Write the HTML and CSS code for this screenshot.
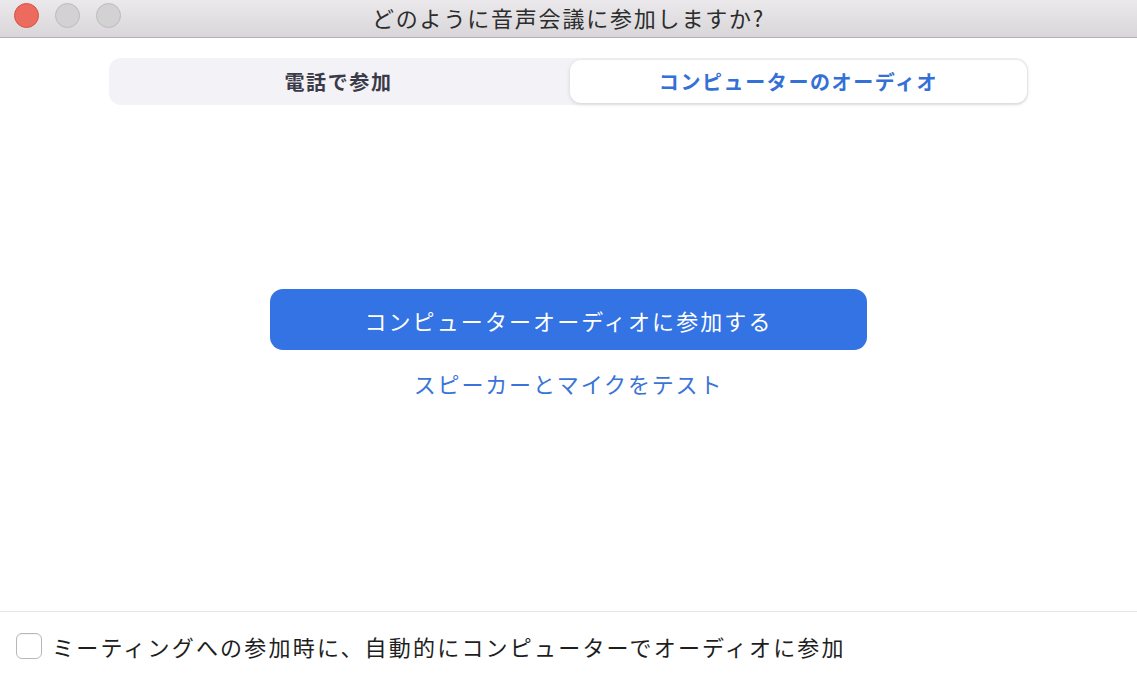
FILE: index.html
```html
<!DOCTYPE html>
<html>
<head>
    <title>どのように音声会議に参加しますか?</title>
    <link rel="stylesheet" href="styles.css">
</head>
<body>
    <div class="window">
        <div class="titlebar">
            <div class="lights">
                <span class="light close"></span>
                <span class="light"></span>
                <span class="light"></span>
            </div>
            <div class="title">どのように音声会議に参加しますか?</div>
        </div>

        <div class="content">
            <div class="tabs">
                <div class="tab">電話で参加</div>
                <div class="tab active">コンピューターのオーディオ</div>
            </div>

            <div class="main">
                <button class="join-btn">コンピューターオーディオに参加する</button>
                <a class="test-link" href="#">スピーカーとマイクをテスト</a>
            </div>
        </div>

        <div class="footer">
            <label class="auto-join">
                <span class="checkbox"></span>
                <span>ミーティングへの参加時に、自動的にコンピューターでオーディオに参加</span>
            </label>
        </div>
    </div>
</body>
</html>
```

FILE: styles.css
```css
body {
    margin: 0;
    font-family: "Noto Sans CJK JP", "Noto Sans", sans-serif;
    background: #ffffff;
    color: #222;
}
.window {
    width: 1137px;
    height: 680px;
    display: flex;
    flex-direction: column;
    overflow: hidden;
}
.titlebar {
    height: 37px;
    flex: none;
    display: flex;
    align-items: center;
    background: linear-gradient(#ebe9eb, #d8d6d8);
    border-bottom: 1px solid #b3b1b3;
    position: relative;
}
.lights {
    display: flex;
    gap: 16px;
    padding-left: 14px;
    margin-top: -6px;
}
.light {
    width: 23px;
    height: 23px;
    border-radius: 50%;
    background: #d3d2d3;
    border: 1px solid #bdbcbd;
}
.light.close {
    background: #ed6a5e;
    border-color: #d45347;
}
.title {
    position: absolute;
    left: 0;
    right: 0;
    top: 1px;
    text-align: center;
    font-size: 22px;
    letter-spacing: 1.8px;
    color: #2c2c2c;
    line-height: 32px;
    pointer-events: none;
}
.content {
    flex: 1;
    display: flex;
    flex-direction: column;
    align-items: center;
}
.tabs {
    margin-top: 20px;
    width: 919px;
    height: 47px;
    box-sizing: border-box;
    background: #f2f2f7;
    border-radius: 12px;
    display: grid;
    grid-template-columns: 1fr 1fr;
    padding: 2px 1px 2px 0;
}
.tab {
    display: flex;
    align-items: center;
    justify-content: center;
    font-size: 20px;
    font-weight: bold;
    letter-spacing: 1.6px;
    color: #3a3a48;
    border-radius: 11px;
}
.tab.active {
    background: #ffffff;
    color: #3470d6;
    box-shadow: 0 1px 4px rgba(0,0,0,0.14);
    margin-left: 2px;
}
.main {
    display: flex;
    flex-direction: column;
    align-items: center;
    margin-top: 184px;
}
.join-btn {
    width: 597px;
    height: 61px;
    border: none;
    border-radius: 13px;
    background: #3373e3;
    color: #ffffff;
    font-family: inherit;
    font-size: 22px;
    letter-spacing: 2.1px;
    cursor: pointer;
}
.test-link {
    margin-top: 17px;
    font-size: 22px;
    letter-spacing: 1.85px;
    color: #3a74d6;
    text-decoration: none;
}
.footer {
    height: 68px;
    flex: none;
    border-top: 1px solid #e6e6e6;
    display: flex;
    align-items: center;
    padding-left: 16px;
}
.auto-join {
    display: flex;
    align-items: center;
    gap: 10px;
    font-size: 22px;
    letter-spacing: 2.2px;
    color: #1e1e1e;
}
.checkbox {
    width: 26px;
    height: 26px;
    box-sizing: border-box;
    border: 1px solid #b8b8b8;
    border-radius: 6px;
    background: #fff;
    box-shadow: inset 0 1px 1px rgba(0,0,0,0.05);
}
```
